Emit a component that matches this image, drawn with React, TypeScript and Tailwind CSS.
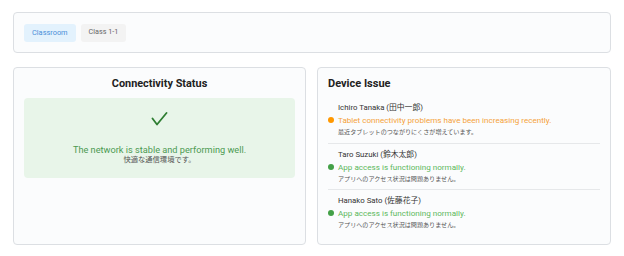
const issues = [
  {
    name: 'Ichiro Tanaka (田中一郎)',
    status: 'warn',
    message: 'Tablet connectivity problems have been increasing recently.',
    note: '最近タブレットのつながりにくさが増えています。',
  },
  {
    name: 'Taro Suzuki (鈴木太郎)',
    status: 'ok',
    message: 'App access is functioning normally.',
    note: 'アプリへのアクセス状況は問題ありません。',
  },
  {
    name: 'Hanako Sato (佐藤花子)',
    status: 'ok',
    message: 'App access is functioning normally.',
    note: 'アプリへのアクセス状況は問題ありません。',
  },
]

export default function App() {
  return (
    <div
      className="w-[624px] h-[256px] bg-white px-[13px] pt-[12px] text-[#333]"
      style={{ fontFamily: 'Roboto, "Noto Sans CJK JP", sans-serif' }}
    >
      {/* Breadcrumb */}
      <div className="h-[41px] rounded-[4px] border border-[#dcdfe3] bg-[#fbfcfd] flex items-center gap-[5px] px-[10px]">
        <span className="h-[18px] px-[8px] rounded-[3px] bg-[#e3f2fd] text-[#4a90d9] text-[7.4px] flex items-center">Classroom</span>
        <span className="h-[18px] px-[8px] rounded-[3px] bg-[#f3f3f3] text-[#666] text-[7.2px] flex items-center">Class 1-1</span>
      </div>

      <div className="mt-[14px] flex gap-[11px]">
        {/* Connectivity */}
        <div className="w-[294px] h-[178px] rounded-[4px] border border-[#dcdfe3] bg-[#fbfcfd] px-[10px] pt-[8px]">
          <h2 className="text-center text-[10.9px] font-bold text-[#222] leading-[16px]">Connectivity Status</h2>
          <div className="mt-[6px] h-[80px] rounded-[4px] bg-[#e8f5e9] flex flex-col items-center pt-[14px]">
            <svg width="17" height="14" viewBox="0 0 17 14" fill="none">
              <path d="M1.5 6.5 L6 12.5 L15.5 1" stroke="#2e7d32" strokeWidth="1.8" strokeLinecap="round" strokeLinejoin="round" />
            </svg>
            <p className="mt-[19px] text-[9.2px] leading-[10px] text-[#4c9a52]">The network is stable and performing well.</p>
            <p className="text-[7.3px] leading-[10px] text-[#555]">快適な通信環境です。</p>
          </div>
        </div>

        {/* Device issue */}
        <div className="w-[295px] h-[178px] rounded-[4px] border border-[#dcdfe3] bg-[#fbfcfd] px-[10px] pt-[8px]">
          <h2 className="text-[11px] font-bold text-[#222] leading-[16px]">Device Issue</h2>
          <div className="mt-[10px]">
            {issues.map((it, i) => (
              <div key={i} className={i > 0 ? 'border-t border-[#e6e8ea] pt-[5px]' : ''}>
                <p className="pl-[10px] text-[7.8px] leading-[12px] text-[#333]">{it.name}</p>
                <div className="flex items-center gap-[4px]">
                  <span className={`w-[6px] h-[6px] rounded-full ${it.status === 'warn' ? 'bg-[#ff9800]' : 'bg-[#43a047]'}`}></span>
                  <p className={`text-[8.1px] leading-[12px] ${it.status === 'warn' ? 'text-[#f5a23a]' : 'text-[#5cb85c]'}`}>{it.message}</p>
                </div>
                <p className="pl-[10px] text-[6.1px] leading-[12px] text-[#555] pb-[4.5px]">{it.note}</p>
              </div>
            ))}
          </div>
        </div>
      </div>
    </div>
  )
}
